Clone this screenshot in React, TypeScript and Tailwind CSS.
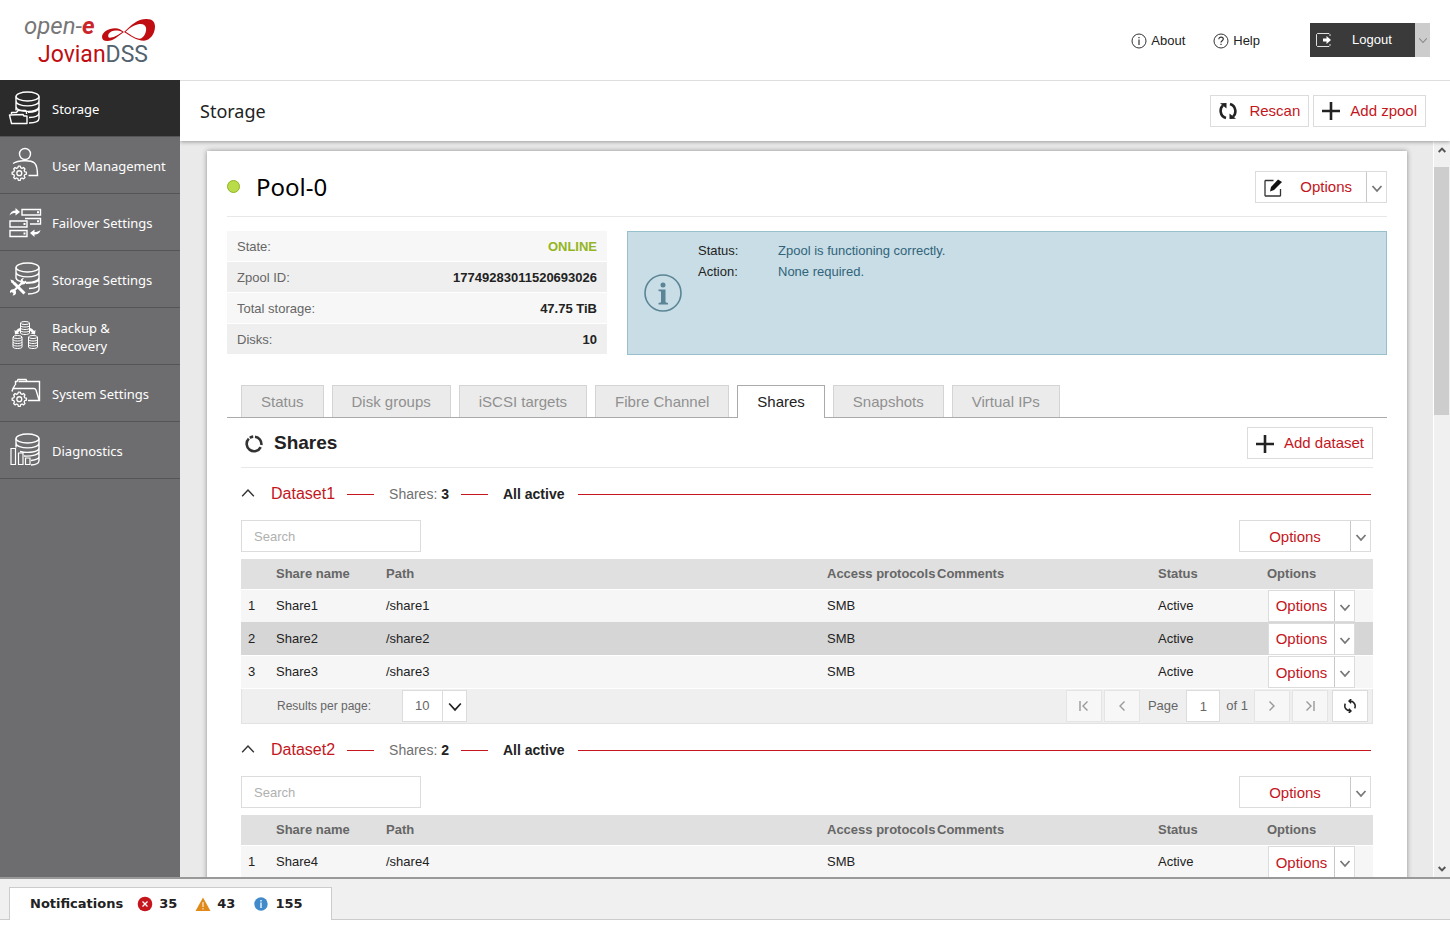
import { useState } from "react";
import type { ReactNode } from "react";

type Share = { name: string; path: string; protocol: string; status: string };

const datasets: { name: string; shares: Share[]; count: number }[] = [
  {
    name: "Dataset1",
    count: 3,
    shares: [
      { name: "Share1", path: "/share1", protocol: "SMB", status: "Active" },
      { name: "Share2", path: "/share2", protocol: "SMB", status: "Active" },
      { name: "Share3", path: "/share3", protocol: "SMB", status: "Active" },
    ],
  },
  {
    name: "Dataset2",
    count: 2,
    shares: [{ name: "Share4", path: "/share4", protocol: "SMB", status: "Active" }],
  },
];

const tabs = ["Status", "Disk groups", "iSCSI targets", "Fibre Channel", "Shares", "Snapshots", "Virtual IPs"];

const stats = [
  { label: "State:", value: "ONLINE", online: true },
  { label: "Zpool ID:", value: "17749283011520693026" },
  { label: "Total storage:", value: "47.75 TiB" },
  { label: "Disks:", value: "10" },
];

/* Icons */

function NavIcon({ children }: { children: ReactNode }) {
  return (
    <svg className="w-9 h-9 shrink-0" viewBox="0 0 36 36" fill="none" stroke="white" strokeWidth={1.4} aria-hidden="true">
      {children}
    </svg>
  );
}

const Gear = () => (
  <g transform="translate(2.2 3.8) scale(.82)" strokeWidth={1.6}>
    <path
      d="M9.9 18.6h2.4l.5 2 1.7.8 1.8-1 1.7 1.7-1 1.8.8 1.7 2 .5v2.4l-2 .5-.8 1.7 1 1.8-1.7 1.7-1.8-1-1.7.8-.5 2H9.9l-.5-2-1.7-.8-1.8 1-1.7-1.7 1-1.8-.8-1.7-2-.5v-2.4l2-.5.8-1.7-1-1.8 1.7-1.7 1.8 1 1.7-.8z"
      strokeLinejoin="round"
    />
    <circle cx="11.1" cy="27.3" r="3" />
  </g>
);

const StorageIcon = () => (
  <NavIcon>
    <ellipse cx="19.5" cy="6.5" rx="11.5" ry="4.5" />
    <path d="M8 6.5v14M31 6.5v22M8 11c0 6.5 23 6.5 23 0M8 16.5c0 6.5 23 6.5 23 0M20 22.3c6 0 11-1.8 11-5M21 27.5c5.5-.2 10-2 10-4.8M21 33c5.5-.2 10-2 10-4.8" />
    <path d="M3.5 24v-1.5h5l1.5-2h7.5l1 1.5V24M1.5 25l2 8.5h15.500V26h-3l-1-1.5z" strokeLinejoin="round" />
  </NavIcon>
);

const UserIcon = () => (
  <NavIcon>
    <circle cx="17" cy="7" r="5.5" />
    <path d="M5 16.5c5-3 17-4 21.5-.5 2 2 3 6 3 12.5h-9" />
    <Gear />
  </NavIcon>
);

const FailoverIcon = () => (
  <NavIcon>
    <path d="M14 5.5h18.5V11H14zM17 14.500h15.500V20H22M2 17h17v6H2zM2 26.5h17v6H2z" />
    <path d="M29 8.200h2M29 17.200h2M15.500 20h2M15.500 29.500h2" strokeWidth={2} />
    <path d="M1.5 11.5c1-3.5 3-5 6-5V4L12 8l-4.500 3.500V9c-2.500 0-4 .5-6 2.500zM32.500 26c-1 3.500-3 4.500-6 4.500V33L22 29l4.500-3.500V28c2.500 0 4-.5 6-2z" fill="white" stroke="none" />
  </NavIcon>
);

const StorageSettingsIcon = () => (
  <NavIcon>
    <ellipse cx="19.5" cy="6.5" rx="11.5" ry="4.5" />
    <path d="M8 6.500v11M31 6.500v22M8 11c0 6.500 23 6.500 23 0M8 16.500c0 6.500 23 6.500 23 0M18 22.300c8 0 13-1.800 13-5M21 27.500c5.500-.2 10-2 10-4.800M20 33c6 0 11-2 11-4.800" />
    <path d="M6 22l10.500 10.500" strokeWidth={3} />
    <path d="M4.500 31L15 21" strokeWidth={2.200} />
    <path d="M2.500 18.500l3 1 2 3-1.200 1.200-3-2.200zM12.500 21.500c-.5-2.500 1-4.500 3.500-4.500l-1.500 2 1.500 1.800 2-1.300c.5 2.500-1.500 4.500-4 4zM6.500 28.500c-3-1-5 1-4.500 3.500l2-1 1.500 1.500-1 2c2.500 0 4-1.500 3.500-4z" fill="white" stroke="none" />
  </NavIcon>
);

const MiniDb = ({ x, y }: { x: number; y: number }) => (
  <g transform={`translate(${x} ${y})`} strokeWidth={1}>
    <ellipse cx="5" cy="2" rx="4.5" ry="1.5" />
    <path d="M.5 2v10M9.500 2v10M.5 4.500c0 2 9 2 9 0M.5 7c0 2 9 2 9 0M.5 9.500c0 2 9 2 9 0M.5 12c0 2 9 2 9 0" />
  </g>
);

const BackupIcon = () => (
  <NavIcon>
    <MiniDb x={12} y={3} />
    <MiniDb x={4.500} y={17} />
    <MiniDb x={20} y={17} />
    <path d="M12 10c-2 .5-3.500 2-4 3L6.500 12l.5 4.500 4.500-1-1.500-1 3-2.500zM22 10c2 .5 3.500 2 4 3l1.500-1-.5 4.500-4.500-1 1.500-1-3-2.500z" fill="white" stroke="none" />
  </NavIcon>
);

const SystemIcon = () => (
  <NavIcon>
    <path d="M7.500 10V6.500H9l1-2h8l1 2h12.500v19H20M10.500 6.500h8M4 16.500l1-3h21c1 0 1.500.5 2 1.500l3 10M7 10l-2 3.500" />
    <g transform="translate(0 -2)">
      <Gear />
    </g>
  </NavIcon>
);

const DiagnosticsIcon = () => (
  <NavIcon>
    <ellipse cx="19.5" cy="6.5" rx="11.5" ry="4.5" />
    <path d="M8 6.500v9M31 6.500v22M8 11c0 6.500 23 6.500 23 0M12 19.500c8 2 19 .5 19-3.500M16 24c8 .5 15-1.500 15-4.500M23 28.500c5-.5 8-2 8-4M23 33c5 0 8-2 8-4.500" />
    <path d="M3 16.500h4.500v16H3zM10.500 21H15v11.500h-4.500zM17.500 26H22v6.500h-4.500z" strokeWidth={1.2} />
  </NavIcon>
);

const nav = [
  { label: "Storage", Icon: StorageIcon },
  { label: "User Management", Icon: UserIcon },
  { label: "Failover Settings", Icon: FailoverIcon },
  { label: "Storage Settings", Icon: StorageSettingsIcon },
  { label: "Backup & Recovery", Icon: BackupIcon },
  { label: "System Settings", Icon: SystemIcon },
  { label: "Diagnostics", Icon: DiagnosticsIcon },
];

const Chevron = ({ className = "w-3 h-3", d = "M1.5 4L6 9l4.500-5", width = 1.8 }) => (
  <svg className={className} viewBox="0 0 12 12" fill="none" stroke="currentColor" strokeWidth={width} aria-hidden="true">
    <path d={d} />
  </svg>
);

const PlusIcon = () => (
  <svg className="w-[18px] h-[18px]" viewBox="0 0 18 18" stroke="#222" strokeWidth={2.6} aria-hidden="true">
    <path d="M9 0v18M0 9h18" />
  </svg>
);

const RescanIcon = () => (
  <svg className="w-[18px] h-[18px]" viewBox="0 0 18 18" fill="none" stroke="#222" strokeWidth={2.6} aria-hidden="true">
    <path d="M7 16C.5 14 .5 6 4 3.500M11 2c6.500 2 6.500 10 3 12.500" />
    <path d="M1 1.200L7.500 1v5.500zM17 16.800l-6.500.2v-5.500z" fill="#222" stroke="none" />
  </svg>
);

/* Shared controls */

function OptionsButton({ size, icon }: { size: "row" | "wide" | "pool"; icon?: ReactNode }) {
  const widths = {
    row: "w-[65px] justify-center",
    wide: "w-[110px] justify-center",
    pool: "w-[110px] justify-between pl-2 pr-3.5",
  };
  return (
    <div className="inline-flex h-8 bg-white border border-[#dcdcdc] text-[15px] align-top">
      <button className={`${widths[size]} flex items-center pt-0.5 text-[#c4161c]`}>
        {icon}
        Options
      </button>
      <button aria-label="More options" className="w-5 flex items-center justify-center border-l border-[#c8c8c8] pt-0.5 text-[#777]">
        <Chevron />
      </button>
    </div>
  );
}

function PagerButton({ label, active, children }: { label: string; active?: boolean; children: ReactNode }) {
  return (
    <button
      aria-label={label}
      className={`w-9 h-8 flex items-center justify-center border ${active ? "ml-[2px] bg-white border-[#dcdcdc] text-[#222]" : "bg-[#f7f7f7] border-[#e4e4e4] text-[#999]"}`}
    >
      {children}
    </button>
  );
}

function Pager({ id }: { id: string }) {
  return (
    <div className="mt-px flex h-[35px] items-center justify-between border border-t-0 border-[#e2e2e2] bg-[#efefef] text-[13px] text-[#666]">
      <div className="flex items-center pl-[35px]">
        <label htmlFor={`${id}-size`} className="w-[125px] text-[12px]">
          Results per page:
        </label>
        <div className="relative">
          <select
            id={`${id}-size`}
            defaultValue="10"
            className="block h-8 w-[65px] appearance-none border border-[#dcdcdc] bg-white bg-linear-to-r from-[#dcdcdc] to-[#dcdcdc] bg-[length:1px_100%] bg-[position:39px_0] bg-no-repeat pl-3"
          >
            <option>10</option>
            <option>25</option>
            <option>50</option>
          </select>
          <Chevron className="pointer-events-none absolute right-1 top-2.5 w-4 h-3.5 text-[#222]" d="M1 3l5 5.500L11 3" width={1.4} />
        </div>
      </div>
      <div className="flex items-center gap-[2px] pr-1">
        <PagerButton label="First page">
          <Chevron d="M2 1v10M9.500 1.500L5 6l4.500 4.500" width={1.4} />
        </PagerButton>
        <PagerButton label="Previous page">
          <Chevron d="M8.500 1.500L4 6l4.500 4.500" width={1.4} />
        </PagerButton>
        <label htmlFor={`${id}-page`} className="px-1.5">
          Page
        </label>
        <input id={`${id}-page`} defaultValue="1" className="h-8 w-[34px] border border-[#dcdcdc] bg-white text-center" />
        <span className="px-1">of 1</span>
        <PagerButton label="Next page">
          <Chevron d="M3.500 1.500L8 6l-4.500 4.500" width={1.4} />
        </PagerButton>
        <PagerButton label="Last page">
          <Chevron d="M10 1v10M2.500 1.500L7 6l-4.500 4.500" width={1.4} />
        </PagerButton>
        <PagerButton label="Reload" active>
          <Chevron
            className="w-3.5 h-3.5"
            d="M5.500 1.800c3.500-.3 6 3 4.500 6.200M6.500 10.200C3 10.500.5 7.200 2 4M7 0L5.200 1.800 7 3.600M5 12l1.800-1.800L5 8.400"
            width={1.3}
          />
        </PagerButton>
      </div>
    </div>
  );
}

function Dataset({ name, shares, count }: { name: string; shares: Share[]; count: number }) {
  const [open, setOpen] = useState(true);
  return (
    <section>
      <div className="flex h-[52px] items-center pr-[2px] text-[14px]">
        <button onClick={() => setOpen(!open)} className="flex items-center gap-4 text-[16px] text-[#c4161c]">
          <Chevron className="w-3.5 h-3.5 text-[#333]" d={open ? "M1 8l5-5.500L11 8" : "M1 3l5 5.500L11 3"} width={1.2} />
          {name}
        </button>
        <span className="ml-3 h-px w-[27px] bg-[#c4161c]" />
        <span className="ml-[15px] text-[#707070]">
          Shares: <b className="text-[#222]">{count}</b>
        </span>
        <span className="ml-3 h-px w-[27px] bg-[#c4161c]" />
        <b className="ml-[15px] text-[#222]">All active</b>
        <span className="ml-3.5 h-px flex-1 bg-[#c4161c]" />
      </div>
      {open && (
        <>
          <div className="flex justify-between pr-[2px]">
            <input
              type="search"
              aria-label={`Search ${name}`}
              placeholder="Search"
              className="h-8 w-[180px] border border-[#dcdcdc] px-3 text-[13px] placeholder:text-[#b0b0b0]"
            />
            <OptionsButton size="wide" />
          </div>
          <table className="mt-[7px] w-full table-fixed text-left text-[13px] text-[#222]">
            <thead className="h-[30px] bg-[#e0e0e0] text-[#666]">
              <tr className="whitespace-nowrap">
                <th className="w-[30px]" aria-label="Number" />
                <th className="w-[110px] px-[5px]">Share name</th>
                <th className="px-[5px]">Path</th>
                <th className="w-[110px] px-[5px]">Access protocols</th>
                <th className="w-[221px] px-[5px]">Comments</th>
                <th className="w-[109px] px-[5px]">Status</th>
                <th className="w-[111px] px-[5px]">Options</th>
              </tr>
            </thead>
            <tbody>
              {shares.map((share, i) => (
                <tr key={share.name} className={`h-[33px] border-t ${i % 2 ? "border-[#d6d6d6] bg-[#d6d6d6]" : "border-white bg-[#f6f6f6]"}`}>
                  <td className="pl-[7px]">{i + 1}</td>
                  <td className="px-[5px]">{share.name}</td>
                  <td className="px-[5px]">{share.path}</td>
                  <td className="px-[5px]">{share.protocol}</td>
                  <td className="px-[5px]" />
                  <td className="px-[5px]">{share.status}</td>
                  <td className="pl-1.5">
                    <OptionsButton size="row" />
                  </td>
                </tr>
              ))}
            </tbody>
          </table>
          {shares.length === count && <Pager id={name} />}
        </>
      )}
    </section>
  );
}

export default function App() {
  const [tab, setTab] = useState("Shares");

  return (
    <div className="flex h-screen flex-col bg-white font-['Liberation_Sans',Arial,sans-serif] text-[13px] text-[#222]">
      {/* Top bar */}
      <header className="flex h-20 shrink-0 items-center justify-between pr-5">
        <svg className="h-20 w-[180px]" viewBox="0 0 180 80" role="img" aria-label="open-e JovianDSS">
          <text x="24" y="34" fontSize="24" fontStyle="italic" fill="#777" fontFamily="Roboto, sans-serif">
            open-
            <tspan fill="#c9252b" fontWeight="700">
              e
            </tspan>
          </text>
          <text x="38" y="62" fontSize="23" fill="#c00d12" fontFamily="Roboto, sans-serif">
            Jovian<tspan fill="#52636f">DSS</tspan>
          </text>
          <path
            transform="scale(.3333)"
            fill="#c00d12"
            fillRule="evenodd"
            d="M372 96C395 75 410 57 440 57C458 57 466 67 465 82C464 102 450 122 432 122C408 122 392 108 372 96C355 108 340 123 322 123C311 123 306 118 306 110C307 97 325 85 345 85C357 85 363 90 372 96ZM377 95C395 78 410 72 422 72C440 73 441 88 436 100C432 110 425 117 418 116C402 114 390 102 377 95ZM367 96C358 92 350 91 342 92C330 94 323 102 325 110C327 117 345 112 367 96Z"
          />
        </svg>
        <div className="flex items-center">
          <a href="#about" className="flex items-center gap-1 pt-0.5">
            <svg className="w-4 h-4" viewBox="0 0 16 16" fill="none" stroke="#333" aria-hidden="true">
              <circle cx="8" cy="8" r="7" />
              <path d="M8 6.500V12M8 4v1.300" strokeWidth={1.2} />
            </svg>
            About
          </a>
          <a href="#help" className="ml-7 flex items-center gap-1 pt-0.5">
            <svg className="w-4 h-4" viewBox="0 0 16 16" fill="none" stroke="#333" aria-hidden="true">
              <circle cx="8" cy="8" r="7" />
              <path d="M5.800 6.300c0-3 4.500-2.700 4.500-.2C10.300 7.700 8 7.800 8 9.500M8 10.800V12" strokeWidth={1.2} />
            </svg>
            Help
          </a>
          <div className="ml-[50px] flex h-[34px] text-white">
            <button className="flex w-[105px] items-center bg-[#3a3a3a] pl-1.5">
              <svg className="w-4 h-4" viewBox="0 0 16 16" fill="none" stroke="white" aria-hidden="true">
                <path d="M14 4V2.500l-1-1H1.500l-1 1v11l1 1H13l1-1V12" opacity=".85" />
                <path d="M7 6.500h3.500V4L15 8l-4.500 4V9.500H7z" fill="white" stroke="none" />
              </svg>
              <span className="ml-5">Logout</span>
            </button>
            <button aria-label="Logout options" className="flex w-[15px] items-center justify-center bg-[#ccc] text-[#888]">
              <Chevron className="w-2.5 h-2.5" width={1.3} />
            </button>
          </div>
        </div>
      </header>

      <div className="flex min-h-0 flex-1">
        {/* Sidebar */}
        <nav className="w-[180px] shrink-0 bg-[#6d6d6f] font-['Noto_Sans',sans-serif] text-[13px] leading-[18px] text-white">
          {nav.map(({ label, Icon }, i) => (
            <a
              key={label}
              href="#nav"
              className={`flex h-[57px] items-center gap-2 border-b border-[#555557] pl-2 ${i === 0 ? "bg-[#2b2b2b]" : ""}`}
            >
              <Icon />
              <span className={`pt-0.5 ${label.startsWith("Backup") ? "w-20" : "whitespace-nowrap"}`}>{label}</span>
            </a>
          ))}
        </nav>

        <main className="flex min-w-0 flex-1 flex-col border-t border-[#dedede]">
          <div className="relative flex h-[60px] shrink-0 items-center justify-between bg-white pl-5 pr-6 shadow-[0_1px_4px_rgba(0,0,0,0.35)] [clip-path:inset(0_0_-8px_0)] z-10">
            <h1 className="font-['Noto_Sans',sans-serif] text-[18px]">Storage</h1>
            <div className="flex gap-1 text-[15px] text-[#c4161c]">
              <button className="flex h-8 items-center gap-3 border border-[#dcdcdc] px-2">
                <RescanIcon />
                Rescan
              </button>
              <button className="flex h-8 items-center gap-2.5 border border-[#dcdcdc] px-2">
                <PlusIcon />
                Add zpool
              </button>
            </div>
          </div>

          <div className="flex min-h-0 flex-1 bg-[#eaeaea]">
            <div className="min-w-0 flex-1 overflow-y-auto pl-[27px] pr-[26px] pt-2.5 [scrollbar-width:none]">
              <div className="bg-white px-5 pb-8 shadow-[0_0_5px_rgba(0,0,0,0.4)]">
                {/* Pool heading */}
                <div className="flex h-[66px] items-center justify-between border-b border-[#e8e8e8] pt-1.5">
                  <div className="flex items-center gap-4">
                    <span className="h-[13px] w-[13px] rounded-full border border-[#8fb422] bg-[#b9dc48]" />
                    <h2 className="font-['Noto_Sans',sans-serif] text-[24px] leading-7 text-black">Pool-0</h2>
                  </div>
                  <OptionsButton
                    size="pool"
                    icon={
                      <svg className="w-[18px] h-[18px]" viewBox="0 0 18 18" fill="none" stroke="#333" strokeWidth={1.3} aria-hidden="true">
                        <path d="M9.500 1.500H1.500L1 2v14.500l.5.5H16l.5-.5V10" />
                        <path d="M6 12.500l1-4.500L14 .5l4 2.500-8 8z" fill="#111" stroke="none" />
                      </svg>
                    }
                  />
                </div>

                {/* Summary */}
                <div className="mt-3.5 flex gap-5">
                  <dl className="flex w-[380px] shrink-0 flex-col gap-px">
                    {stats.map((stat, i) => (
                      <div key={stat.label} className={`flex h-[30px] items-center justify-between px-2.5 pt-0.5 ${i % 2 ? "bg-[#efefef]" : "bg-[#f7f7f7]"}`}>
                        <dt className="text-[#666]">{stat.label}</dt>
                        <dd className={`font-bold ${stat.online ? "text-[#94b51f]" : ""}`}>{stat.value}</dd>
                      </div>
                    ))}
                  </dl>
                  <div className="flex h-[124px] flex-1 items-center border border-[#97bfcc] bg-[#c8dde5] pl-4">
                    <svg className="h-[38px] w-[38px]" viewBox="0 0 38 38" fill="none" stroke="#5b8496" strokeWidth={1.6} aria-hidden="true">
                      <circle cx="19" cy="19" r="18" />
                      <circle cx="19" cy="11" r="2.5" fill="#5b8496" stroke="none" />
                      <path d="M14.500 15.500h7v12.800l2.500.7v1.500h-9.500V29l2.500-.7V17.500l-2.500-.5z" fill="#5b8496" stroke="none" />
                    </svg>
                    <dl className="ml-4 grid grid-cols-[80px_1fr] self-start pt-2 leading-[21px]">
                      <dt>Status:</dt>
                      <dd className="text-[#31637b]">Zpool is functioning correctly.</dd>
                      <dt>Action:</dt>
                      <dd className="text-[#31637b]">None required.</dd>
                    </dl>
                  </div>
                </div>

                {/* Tabs */}
                <div role="tablist" className="mt-[30px] flex gap-2 border-b border-[#aaa] pl-3.5 text-[15px]">
                  {tabs.map((label) => (
                    <button
                      key={label}
                      role="tab"
                      aria-selected={tab === label}
                      onClick={() => setTab(label)}
                      className={`border border-b-0 px-[19px] ${tab === label ? "-mb-px h-[33px] border-[#aaa] bg-white text-[#222]" : "h-8 border-[#d4d4d4] bg-[#ebebeb] pt-px text-[#909090]"}`}
                    >
                      {label}
                    </button>
                  ))}
                </div>

                {/* Shares */}
                <div className="px-3.5">
                  <div className="flex h-[50px] items-center justify-between border-b border-[#e8e8e8]">
                    <h3 className="flex items-center gap-[11px] pl-1 pt-0.5 text-[19px] font-bold">
                      <svg className="w-[18px] h-[18px]" viewBox="0 0 18 18" fill="none" stroke="#333" strokeWidth={2.6} aria-hidden="true">
                        <path d="M10 1.670A7.400 7.400 0 0 1 16.300 10M15.700 12.200A7.400 7.400 0 1 1 3.800 3.700M4.800 2.900A7.400 7.400 0 0 1 8.200 1.640" />
                      </svg>
                      Shares
                    </h3>
                    <button className="flex h-8 items-center gap-2.5 border border-[#dcdcdc] px-2 pt-0.5 text-[15px] text-[#c4161c]">
                      <PlusIcon />
                      Add dataset
                    </button>
                  </div>
                  {datasets.map((dataset) => (
                    <Dataset key={dataset.name} {...dataset} />
                  ))}
                </div>
              </div>
            </div>

            {/* Scrollbar */}
            <div className="flex w-[17px] shrink-0 flex-col border-l border-white bg-[#f0f0f0] text-[#555]">
              <button aria-label="Scroll up" className="flex h-[26px] items-center justify-center pb-2">
                <Chevron className="w-2 h-2" d="M1 9l5-5 5 5" width={3} />
              </button>
              <div className="h-[248px] w-[15px] bg-[#cdcdcd]" />
              <button aria-label="Scroll down" className="mt-auto flex h-[17px] items-center justify-center">
                <Chevron className="w-2 h-2" d="M1 3l5 5 5-5" width={3} />
              </button>
            </div>
          </div>
        </main>
      </div>

      {/* Notifications */}
      <footer className="mb-[5px] flex h-[43px] shrink-0 items-end border-b border-t-2 border-b-[#ccc] border-t-[#999] bg-[#f0f0f0] pl-[9px]">
        <button className="-mb-px flex h-[33px] w-[323px] items-center border border-b-0 border-[#ccc] bg-white pl-5 font-['DejaVu_Sans',sans-serif] text-[13px] font-bold">
          Notifications
          <svg className="ml-3.5 mr-1.5 w-4 h-4" viewBox="0 0 16 16" aria-hidden="true">
            <circle cx="8" cy="8" r="7.3" fill="#c4161c" />
            <path d="M5.500 5.500l5 5M10.500 5.500l-5 5" stroke="white" strokeWidth={1.3} />
          </svg>
          35
          <svg className="ml-[18px] mr-1.5 w-4 h-4" viewBox="0 0 16 16" aria-hidden="true">
            <path d="M8 1.500L15.500 15H.5z" fill="#e08a1a" />
            <path d="M8 6v5M8 12.200v1.300" stroke="white" />
          </svg>
          43
          <svg className="ml-[18px] mr-1.5 w-4 h-4" viewBox="0 0 16 16" aria-hidden="true">
            <circle cx="8" cy="8" r="6.7" fill="#428bca" />
            <path d="M8 6.500V12M8 4v1.400" stroke="white" strokeWidth={1.3} />
          </svg>
          155
        </button>
      </footer>
    </div>
  );
}
